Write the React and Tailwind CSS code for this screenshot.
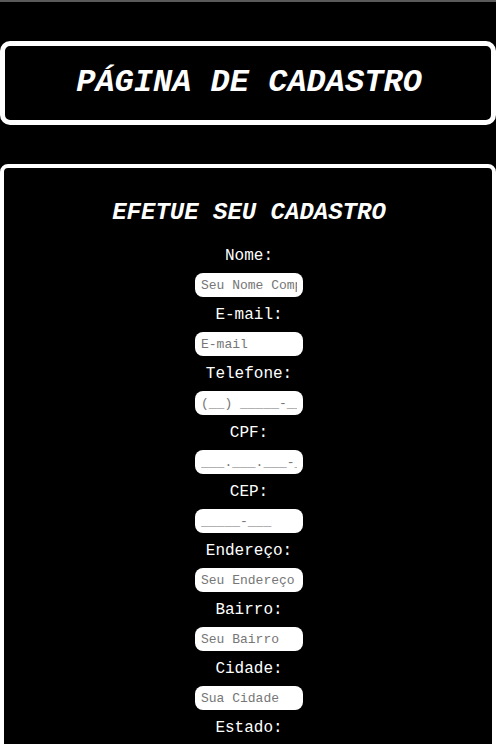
import React from "react";

const campos = [
  { label: "Nome:", placeholder: "Seu Nome Completo", type: "text" },
  { label: "E-mail:", placeholder: "E-mail", type: "email" },
  { label: "Telefone:", placeholder: "(__) _____-____", type: "tel" },
  { label: "CPF:", placeholder: "___.___.___-__", type: "text" },
  { label: "CEP:", placeholder: "_____-___", type: "text" },
  { label: "Endereço:", placeholder: "Seu Endereço", type: "text" },
  { label: "Bairro:", placeholder: "Seu Bairro", type: "text" },
  { label: "Cidade:", placeholder: "Sua Cidade", type: "text" },
];

const Cadastro = () => {
  return (
    <div className="min-h-screen bg-black text-white font-['Liberation_Mono','Courier_New',monospace]">
      {/* barra do topo */}
      <div className="h-[2px] bg-[#5a5a5a]" />

      {/* Cabeçalho */}
      <div className="pt-[39px]">
        <div className="h-[84px] border-[5px] border-white rounded-[10px] flex items-center justify-center">
          <h1 className="text-[32px] leading-[36px] font-bold italic pl-[2px]">
            PÁGINA DE CADASTRO
          </h1>
        </div>
      </div>

      {/* Formulário */}
      <div className="mt-[39px] border-[4px] border-white rounded-[8px] pt-[31px] pb-10 pl-[2px] flex flex-col items-center">
        <h2 className="text-[24px] leading-[28px] font-bold italic mb-[19px]">
          EFETUE SEU CADASTRO
        </h2>

        <form className="flex flex-col items-center">
          {campos.map((c) => (
            <div key={c.label} className="flex flex-col items-center">
              <label className="text-[16px] leading-[18px] pt-[1px]">{c.label}</label>
              <input
                type={c.type}
                placeholder={c.placeholder}
                className="mt-[8px] mb-[8px] w-[108px] h-[24px] rounded-[8px] bg-white px-[6px] text-[13px] text-black placeholder:text-[#767676] outline-none"
              />
            </div>
          ))}
          <label className="text-[16px] leading-[18px] pt-[1px]">Estado:</label>
          <select className="mt-[8px] w-[108px] h-[24px] rounded-[8px] bg-white px-[6px] text-[13px] text-black">
            <option>Selecione</option>
          </select>
        </form>
      </div>
    </div>
  );
};

export default Cadastro;
